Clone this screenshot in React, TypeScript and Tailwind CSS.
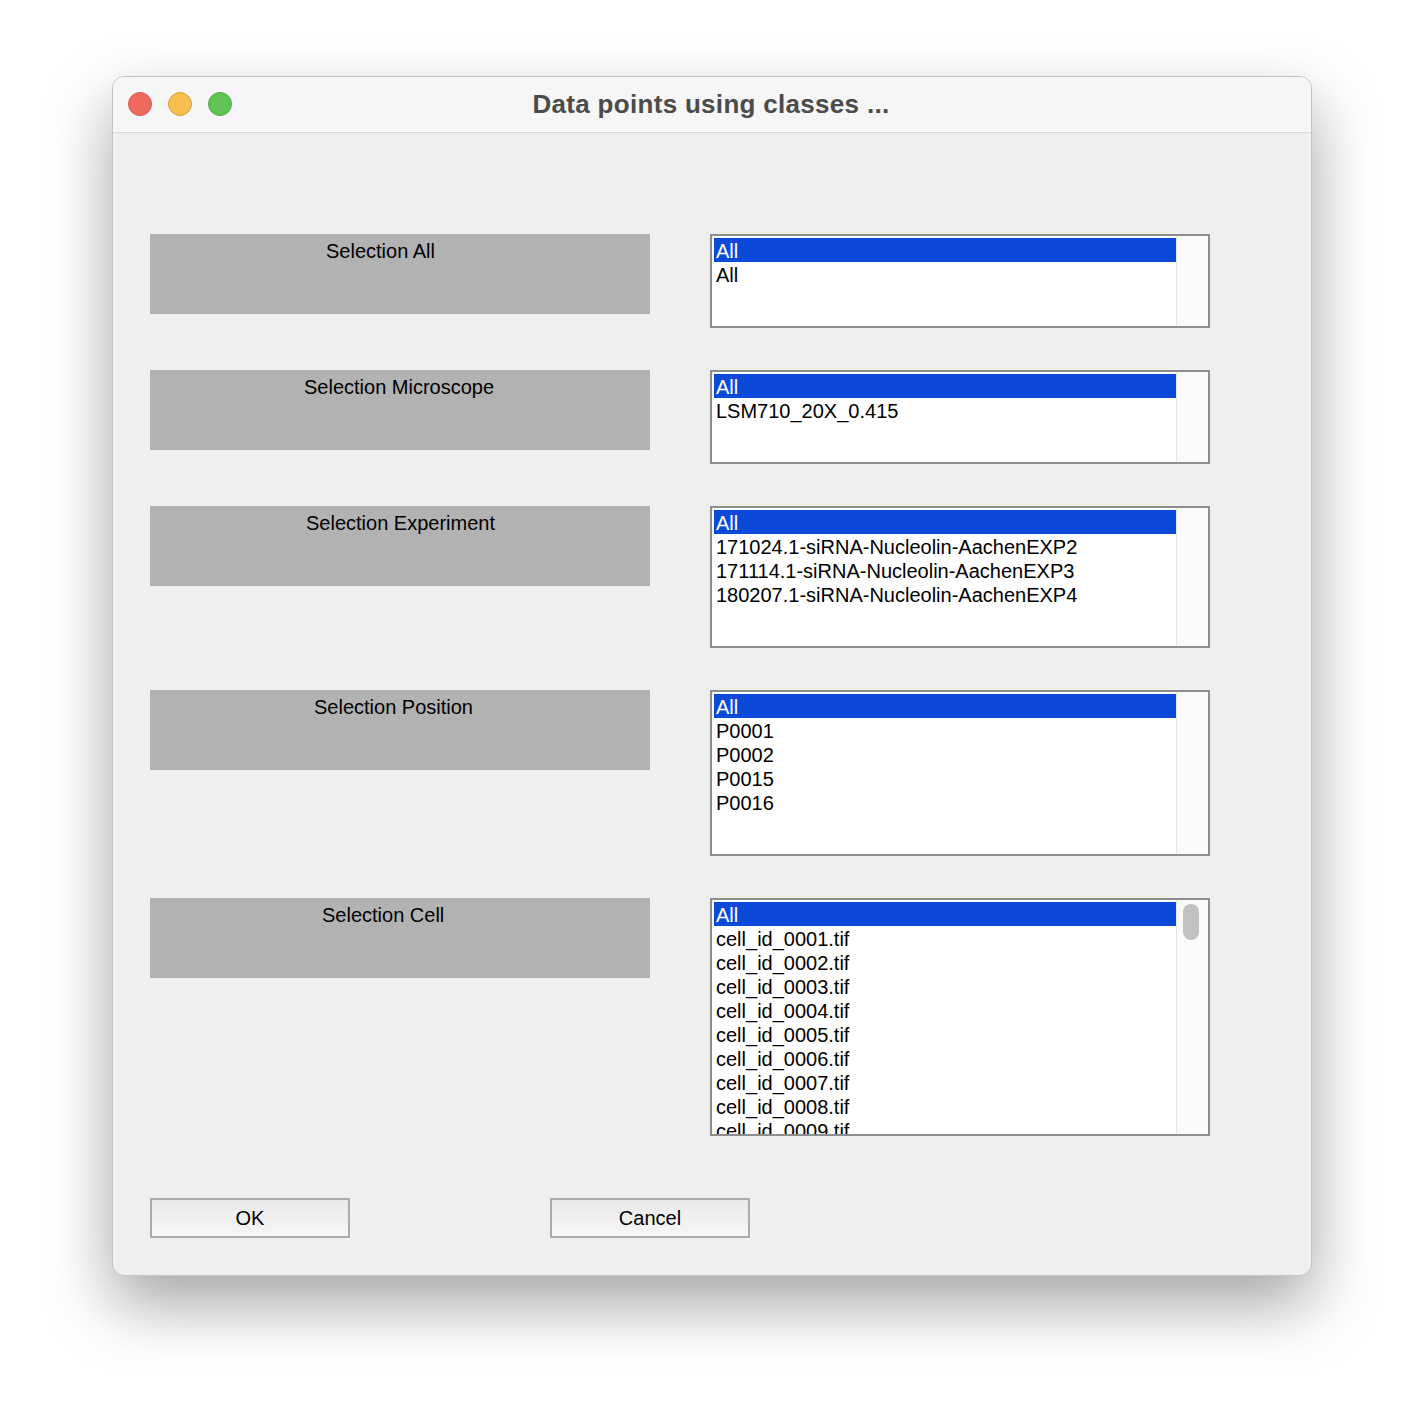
import React from 'react';

type Row = {
  label: string;
  labelPad: string;
  boxH: string;
  items: string[];
  thumb?: boolean;
};

const rows: Row[] = [
  { label: 'Selection All', labelPad: 'pl-[176px]', boxH: 'h-[94px]', items: ['All', 'All'] },
  { label: 'Selection Microscope', labelPad: 'pl-[154px]', boxH: 'h-[94px]', items: ['All', 'LSM710_20X_0.415'] },
  {
    label: 'Selection Experiment',
    labelPad: 'pl-[156px]',
    boxH: 'h-[142px]',
    items: [
      'All',
      '171024.1-siRNA-Nucleolin-AachenEXP2',
      '171114.1-siRNA-Nucleolin-AachenEXP3',
      '180207.1-siRNA-Nucleolin-AachenEXP4',
    ],
  },
  {
    label: 'Selection Position',
    labelPad: 'pl-[164px]',
    boxH: 'h-[166px]',
    items: ['All', 'P0001', 'P0002', 'P0015', 'P0016'],
  },
  {
    label: 'Selection Cell',
    labelPad: 'pl-[172px]',
    boxH: 'h-[238px]',
    thumb: true,
    items: ['All', ...Array.from({ length: 9 }, (_, i) => `cell_id_${String(i + 1).padStart(4, '0')}.tif`)],
  },
];

const ListBox: React.FC<{ items: string[]; h: string; thumb?: boolean }> = ({ items, h, thumb }) => (
  <div className={`w-[500px] ${h} border-2 border-[#8e8e8e] bg-white flex overflow-hidden`}>
    <div className="flex-1 pt-[2px] pl-[2px] overflow-hidden">
      {items.map((it, i) => (
        <div
          key={i}
          className={`h-[24px] leading-[26px] pl-[2px] text-[20px] whitespace-nowrap ${
            i === 0 ? 'bg-[#0b4ad8] text-white' : 'text-black'
          }`}
        >
          {it}
        </div>
      ))}
    </div>
    {/* scrollbar track */}
    <div className="w-[32px] bg-[#fafafa] border-l border-[#e4e4e4] relative">
      {thumb && <div className="absolute left-[6px] top-[4px] w-[16px] h-[36px] rounded-full bg-[#c1c1c1]" />}
    </div>
  </div>
);

export default function App() {
  return (
    <div className="w-[1424px] h-[1424px] bg-white pl-[112px] pt-[76px]" style={{ fontFamily: '"Liberation Sans", Arial, sans-serif' }}>
      <div className="w-[1200px] h-[1200px] rounded-[12px] border border-[#c4c4c4] bg-[#efefef] overflow-hidden shadow-[0_28px_65px_rgba(0,0,0,0.36)] flex flex-col">
        {/* Title bar */}
        <div className="h-[56px] shrink-0 bg-[#f6f6f6] border-b border-[#d6d6d6] relative flex items-center justify-center">
          <div className="absolute left-[15px] top-[15px] flex gap-[16px]">
            <span className="w-[24px] h-[24px] rounded-full bg-[#ee6a5e] border border-[#d8574c]" />
            <span className="w-[24px] h-[24px] rounded-full bg-[#f5be4f] border border-[#d9a23c]" />
            <span className="w-[24px] h-[24px] rounded-full bg-[#61c454] border border-[#4fa943]" />
          </div>
          <span className="text-[26px] font-bold text-[#4b4b4b] tracking-[0.3px] pr-[2px]">Data points using classes ...</span>
        </div>

        {/* Content */}
        <div className="flex flex-col pl-[37px] pt-[101px] gap-[42px]">
          {rows.map((r) => (
            <div key={r.label} className="flex gap-[60px] items-start">
              <div className={`w-[500px] h-[80px] bg-[#b2b2b2] ${r.labelPad} pt-[5px] text-[20px] leading-[24px] text-black whitespace-nowrap`}>
                {r.label}
              </div>
              <ListBox items={r.items} h={r.boxH} thumb={r.thumb} />
            </div>
          ))}
        </div>

        <div className="flex gap-[200px] pl-[37px] pt-[62px]">
          {['OK', 'Cancel'].map((b) => (
            <button
              key={b}
              className="w-[200px] h-[40px] border-2 border-[#ababab] bg-gradient-to-b from-[#e9e9e9] to-[#f6f6f6] text-[20px] text-black"
            >
              {b}
            </button>
          ))}
        </div>
      </div>
    </div>
  );
}
